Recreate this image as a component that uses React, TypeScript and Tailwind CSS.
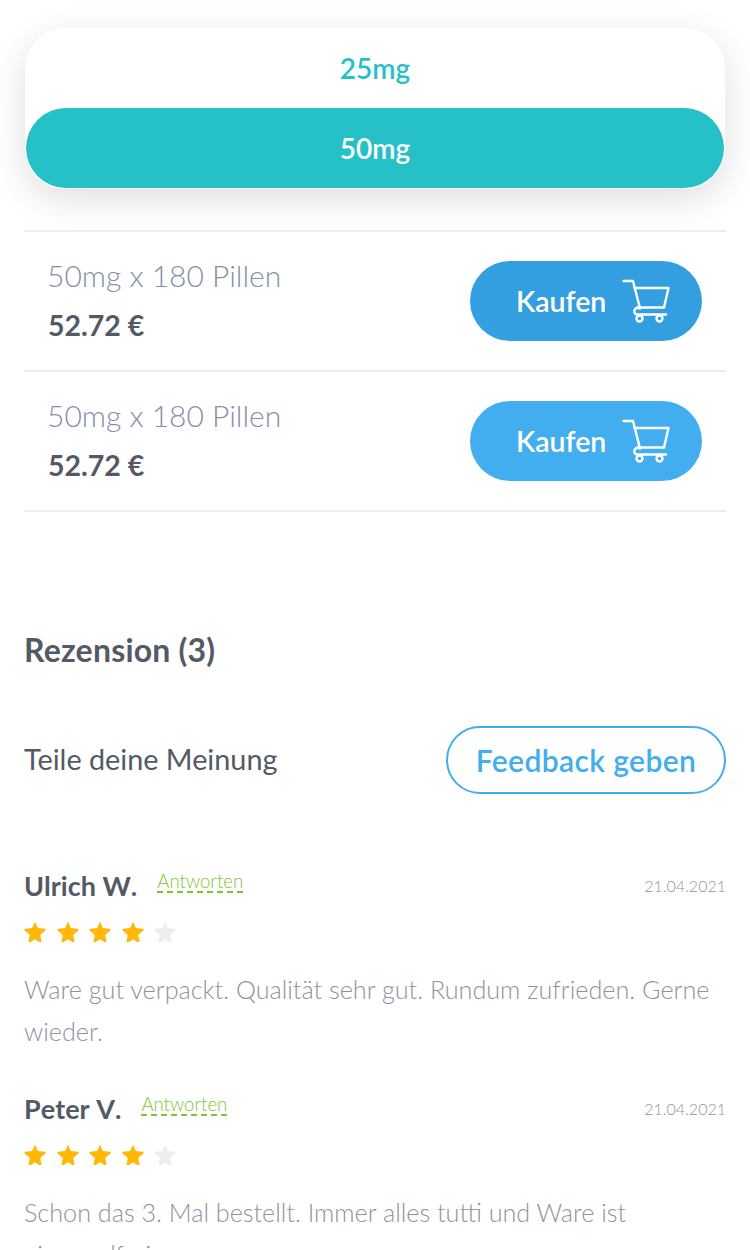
import { Fragment } from "react";

const offers = [
  { label: "50mg x 180 Pillen", price: "52.72 €", button: "bg-[#349fe0]" },
  { label: "50mg x 180 Pillen", price: "52.72 €", button: "bg-[#42adef]" },
];

const reviews = [
  {
    name: "Ulrich W.",
    date: "21.04.2021",
    text: "Ware gut verpackt. Qualität sehr gut. Rundum zufrieden. Gerne wieder.",
  },
  {
    name: "Peter V.",
    date: "21.04.2021",
    text: "Schon das 3. Mal bestellt. Immer alles tutti und Ware ist einwandfrei.",
  },
];

function CartIcon() {
  return (
    <svg width="48" height="44" viewBox="0 0 48 44" fill="none" stroke="white" strokeWidth="2.4" strokeLinecap="round" strokeLinejoin="round">
      <path d="M1.5 2h9.5l7 27.5" />
      <path d="M12.5 9h34l-4.500 19.500H15" />
      <path d="M18 29h-2.500a3 3 0 0 0 0 6.500H44" />
      <circle cx="17.500" cy="39.500" r="3" />
      <circle cx="37.500" cy="39.500" r="3" />
    </svg>
  );
}

function Star({ filled }: { filled: boolean }) {
  return (
    <svg width="22" height="21" viewBox="0 0 24 23" className={filled ? "fill-[#ffb808]" : "fill-[#eeeeee]"}>
      <path d="M12 0.800l3.200 7 7.700 0.800a1 1 0 0 1 0.500 1.700l-5.700 5.100 1.600 7.500a0.900 0.900 0 0 1-1.300 1L12 20.100l-6 3.800a0.900 0.900 0 0 1-1.300-1l1.600-7.500L0.600 10.300a1 1 0 0 1 0.500-1.700l7.700-0.800z" />
    </svg>
  );
}

export default function App() {
  return (
    <div className="h-[1250px] overflow-hidden bg-white px-6 pt-7 font-['Lato',sans-serif]">
      <div className="mx-px rounded-[40px] bg-white px-px pb-px shadow-[0_10px_36px_rgba(0,0,0,0.13)]">
        <div className="flex h-20 items-center justify-center text-[28px] font-semibold text-[#25c1c6]">25mg</div>
        <div className="flex h-20 items-center justify-center rounded-[40px] bg-[#25c1c6] text-[28px] font-semibold text-white">50mg</div>
      </div>

      <div className="mt-[41px] border-t-2 border-[#eeeeee]">
        {offers.map((offer, i) => (
          <div key={i} className="flex h-[140px] items-center justify-between border-b-2 border-[#eeeeee] px-6">
            <div className="pb-1">
              <div className="-ml-px text-[30px] leading-9 font-light text-[#8490a8]">{offer.label}</div>
              <div className="mt-4 text-[28.500px] leading-8 font-bold text-[#535a65]">{offer.price}</div>
            </div>
            <button className={`flex h-20 w-[232px] items-center gap-4 rounded-[40px] pl-[46px] text-[28.500px] font-semibold text-white ${offer.button}`}>
              Kaufen
              <CartIcon />
            </button>
          </div>
        ))}
      </div>

      <h2 className="mt-[118px] text-[32px] leading-10 font-bold tracking-[0.2px] text-[#535a65]">Rezension (3)</h2>

      <div className="mt-[56px] flex items-center justify-between">
        <span className="text-[28.800px] text-[#535a65]">Teile deine Meinung</span>
        <button className="h-[68px] w-[280px] rounded-[34px] border-2 border-[#42adef] text-[30px] font-semibold tracking-[0.4px] text-[#42adef]">
          Feedback geben
        </button>
      </div>

      <div className="mt-[72px] flex flex-col gap-[37px]">
        {reviews.map((review) => (
          <Fragment key={review.name}>
            <div>
              <div className="flex items-start justify-between">
                <div className="flex items-start gap-5">
                  <span className="text-[27px] leading-10 font-bold [font-kerning:none] text-[#535a65]">{review.name}</span>
                  <span className="mt-[6px] border-b-2 border-dashed border-[#7cc62f] text-[18.600px] leading-[19px] font-light text-[#7cc62f]">Antworten</span>
                </div>
                <span className="mt-2 text-base leading-6 font-light text-[#8f92a0]">{review.date}</span>
              </div>
              <div className="mt-[15px] flex gap-[10.500px]">
                {[0, 1, 2, 3, 4].map((n) => (
                  <Star key={n} filled={n < 4} />
                ))}
              </div>
              <p className="mt-[26px] text-[25.200px] leading-[42px] font-light text-[#8f92a0]">{review.text}</p>
            </div>
          </Fragment>
        ))}
      </div>
    </div>
  );
}
